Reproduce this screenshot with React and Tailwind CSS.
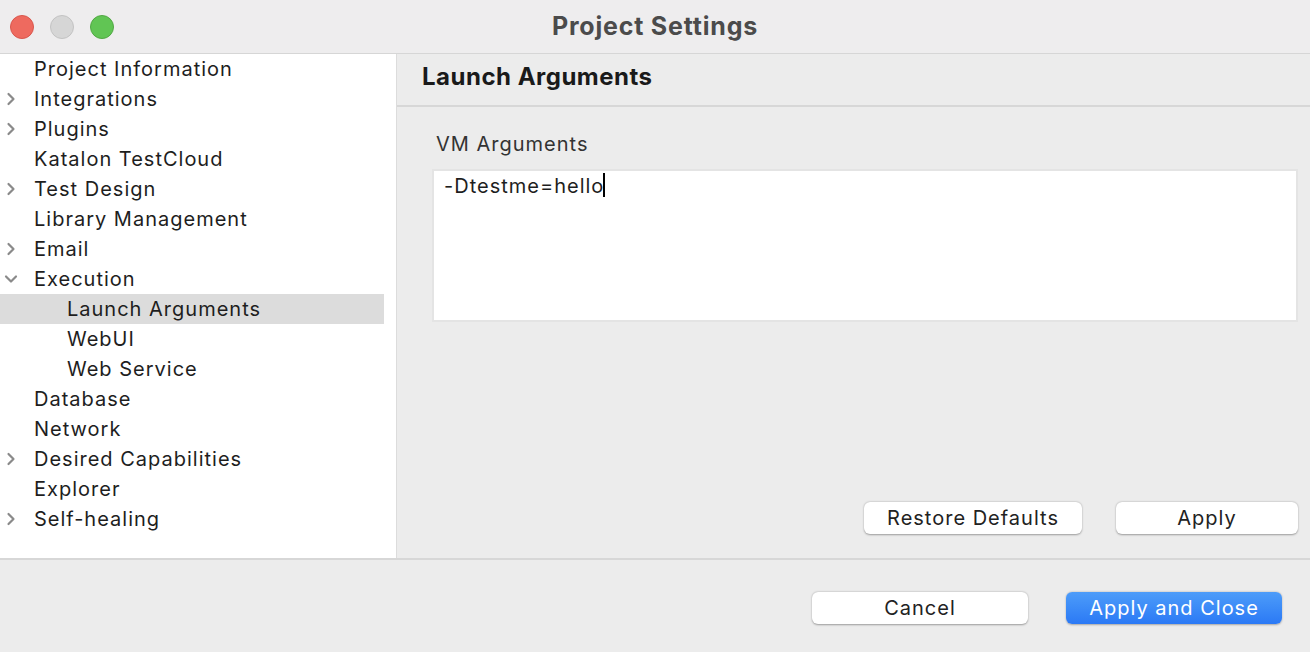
const tree = [
  { label: "Project Information" },
  { label: "Integrations", arrow: "right" },
  { label: "Plugins", arrow: "right" },
  { label: "Katalon TestCloud" },
  { label: "Test Design", arrow: "right" },
  { label: "Library Management" },
  { label: "Email", arrow: "right" },
  { label: "Execution", arrow: "down" },
  { label: "Launch Arguments", child: true, selected: true },
  { label: "WebUI", child: true },
  { label: "Web Service", child: true },
  { label: "Database" },
  { label: "Network" },
  { label: "Desired Capabilities", arrow: "right" },
  { label: "Explorer" },
  { label: "Self-healing", arrow: "right" },
];

function Chevron({ down }) {
  return (
    <svg className="w-[14px] h-[14px]" viewBox="0 0 14 14" fill="none">
      {down ? (
        <path d="M2 4.5l5 5 5-5" stroke="#8a8a8a" strokeWidth="2.2" strokeLinecap="round" strokeLinejoin="round" />
      ) : (
        <path d="M4.5 2l5 5-5 5" stroke="#8a8a8a" strokeWidth="2.2" strokeLinecap="round" strokeLinejoin="round" />
      )}
    </svg>
  );
}

const btn =
  "h-[32px] bg-white rounded-[6px] shadow-[0_0.5px_2px_rgba(0,0,0,0.35)] text-[20px] text-[#222] tracking-[1px]";

export default function App() {
  return (
    <div
      className="w-[1310px] h-[652px] bg-[#ececec] flex flex-col overflow-hidden text-[#1e1e1e]"
      style={{ fontFamily: 'Inter, "Liberation Sans", sans-serif' }}
    >
      {/* Title bar */}
      <div className="h-[54px] shrink-0 flex items-center relative border-b border-[#d6d6d6] bg-[#eeedee]">
        <div className="flex items-center gap-[16px] pl-[10px]">
          <span className="w-[24px] h-[24px] rounded-full bg-[#ee6a5f] border border-[#d9574d]" />
          <span className="w-[24px] h-[24px] rounded-full bg-[#d6d6d6] border border-[#c3c3c3]" />
          <span className="w-[24px] h-[24px] rounded-full bg-[#61c554] border border-[#52a844]" />
        </div>
        <div className="absolute inset-0 flex items-center justify-center text-[25px] font-bold tracking-[0.8px] text-[#4b4b4b] pointer-events-none">
          Project Settings
        </div>
      </div>

      {/* Body */}
      <div className="h-[506px] shrink-0 flex border-b-2 border-[#d7d7d7]">
        <div className="w-[397px] shrink-0 bg-white border-r border-[#dcdcdc]">
          <div className="w-[384px]">
            {tree.map((item) => (
              <div
                key={item.label}
                className={`h-[30px] flex items-center text-[20px] tracking-[1px] ${item.selected ? "bg-[#dcdcdc]" : ""}`}
              >
                <div className="w-[34px] shrink-0 flex items-center pl-[4px]">
                  {item.arrow && <Chevron down={item.arrow === "down"} />}
                </div>
                <span className={item.child ? "pl-[33px]" : ""}>{item.label}</span>
              </div>
            ))}
          </div>
        </div>

        <div className="flex-1 flex flex-col">
          <div className="h-[53px] shrink-0 border-b-2 border-[#d7d7d7] flex items-center pl-[25px] pb-[5px] text-[24px] font-bold tracking-[0.5px] text-[#1a1a1a]">
            Launch Arguments
          </div>
          <div className="flex-1 flex flex-col pl-[35px] pr-[12px]">
            <div className="mt-[22px] pl-[4px] text-[20px] tracking-[1px] text-[#333]">VM Arguments</div>
            <div className="mt-[10px] h-[153px] bg-white border-2 border-[#e4e4e4] pl-[10px] text-[20px] tracking-[1px] text-[#1e1e1e] flex">
              <span>-Dtestme=hello</span>
              <span className="w-[2px] h-[24px] bg-black mt-[2px] -ml-[1px]" />
            </div>
            <div className="mt-auto mb-[24px] flex justify-end gap-[34px]">
              <button className={`${btn} w-[218px]`}>Restore Defaults</button>
              <button className={`${btn} w-[182px]`}>Apply</button>
            </div>
          </div>
        </div>
      </div>

      {/* Footer */}
      <div className="flex-1 flex justify-end items-start pt-[32px] pr-[28px] gap-[38px]">
        <button className={`${btn} w-[216px]`}>Cancel</button>
        <button className="w-[216px] h-[32px] rounded-[6px] bg-gradient-to-b from-[#4d9cf9] to-[#2b79f5] shadow-[0_0.5px_2px_rgba(0,0,0,0.3)] text-[20px] tracking-[1px] text-white">
          Apply and Close
        </button>
      </div>
    </div>
  );
}
